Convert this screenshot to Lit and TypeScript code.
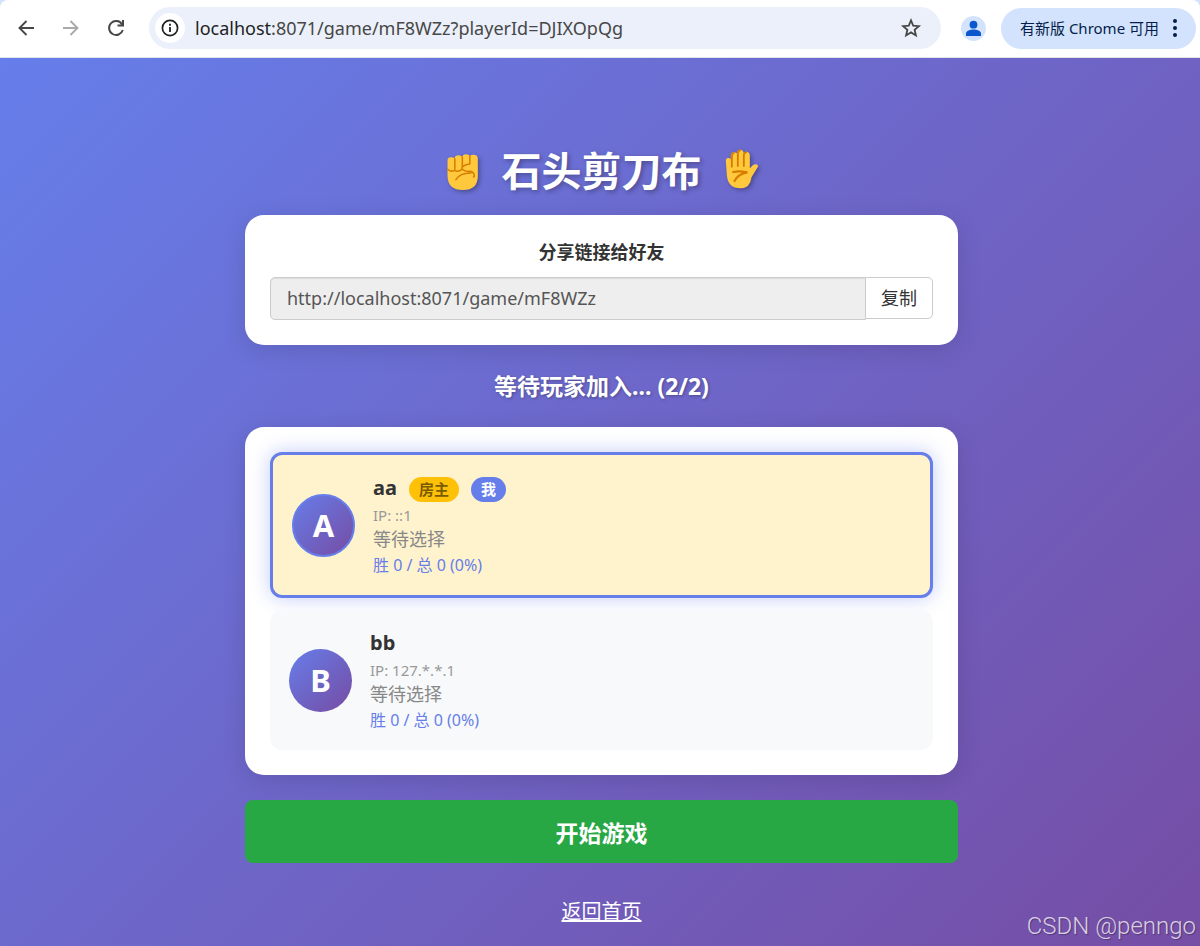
import { LitElement, html, css, nothing } from "lit";
import { customElement, property, state } from "lit/decorators.js";

interface Player {
  name: string;
  ip: string;
  status: string;
  stats: string;
  host?: boolean;
  me?: boolean;
}

@customElement("browser-bar")
class BrowserBar extends LitElement {
  @property() host = "";
  @property() path = "";

  static styles = css`
    :host {
      display: block;
      background: #d3e3fd;
      font-family: "Noto Sans", "Noto Sans CJK SC", sans-serif;
    }
    .bar {
      display: flex;
      align-items: center;
      height: 56px;
      padding: 0 4px 1px 8px;
      background: #fff;
      border-radius: 8px 8px 0 0;
      border-bottom: 1px solid #dfe3ea;
    }
    button {
      border: 0;
      padding: 0;
      margin: 0;
      background: none;
      font: inherit;
      color: inherit;
      display: flex;
      align-items: center;
      justify-content: center;
    }
    .nav {
      display: flex;
      gap: 9px;
      margin-right: 15px;
    }
    .nav button {
      width: 36px;
      height: 36px;
    }
    .address {
      flex: 1;
      display: flex;
      align-items: center;
      height: 42px;
      padding: 0 18px 0 6px;
      border-radius: 21px;
      background: #ebf0fa;
    }
    .address .info {
      width: 30px;
      height: 30px;
      border-radius: 50%;
      background: #fff;
    }
    .url {
      flex: 1;
      margin-left: 10px;
      font-size: 18px;
      line-height: 26px;
      color: #474747;
    }
    .url b {
      font-weight: 400;
      color: #1f1f1f;
    }
    .avatar {
      width: 25px;
      height: 25px;
      margin: 0 15px 0 20px;
    }
    .update {
      height: 41px;
      padding: 0 12px 0 19px;
      gap: 7px;
      border-radius: 21px;
      background: #d3e3fd;
      color: #041e49;
      font-size: 15px;
      line-height: 22px;
    }
    svg {
      display: block;
    }
  `;

  render() {
    return html`
      <header class="bar">
        <nav class="nav">
          <button aria-label="后退">
            <svg width="18" height="18" viewBox="0 0 18 18" fill="none" stroke="#474747" stroke-width="1.900">
              <path d="M17 9H3M9.500 2 2.500 9l7 7" />
            </svg>
          </button>
          <button aria-label="前进">
            <svg width="18" height="18" viewBox="0 0 18 18" fill="none" stroke="#ababab" stroke-width="1.900">
              <path d="M1 9h14M8.500 2l7 7-7 7" />
            </svg>
          </button>
          <button aria-label="刷新">
            <svg width="18" height="18" viewBox="0 0 18 18" fill="none" stroke="#474747" stroke-width="2">
              <path d="M15 5.200A7 7 0 1 0 15.800 11M16 1v5.500h-5.500" />
            </svg>
          </button>
        </nav>
        <div class="address">
          <button class="info" aria-label="网站信息">
            <svg width="18" height="18" viewBox="0 0 18 18" fill="none" stroke="#1f1f1f">
              <circle cx="9" cy="9" r="7.600" stroke-width="1.700" />
              <path d="M9 8v5M9 4.800v1.900" stroke-width="1.800" />
            </svg>
          </button>
          <span class="url"><b>${this.host}</b>${this.path}</span>
          <button aria-label="收藏">
            <svg width="24" height="24" viewBox="0 0 24 24" fill="none" stroke="#474747" stroke-width="1.800">
              <path d="M12 4.300l2.200 5.300 5.700.5-4.300 3.700 1.300 5.600L12 16.400l-4.900 3 1.300-5.600-4.300-3.700 5.700-.5z" />
            </svg>
          </button>
        </div>
        <button class="avatar" aria-label="个人资料">
          <svg width="25" height="25" viewBox="0 0 25 25">
            <circle cx="12.500" cy="12.500" r="12.500" fill="#d3e3fd" />
            <circle cx="12.500" cy="8.700" r="3.900" fill="#0b57d0" />
            <path d="M5 20v-2.500c0-2.700 4.500-4 7.500-4s7.500 1.300 7.500 4V20z" fill="#0b57d0" />
          </svg>
        </button>
        <button class="update">
          有新版 Chrome 可用
          <svg width="18" height="20" viewBox="0 0 18 20" fill="#041e49">
            <circle cx="9" cy="3" r="2" />
            <circle cx="9" cy="10" r="2" />
            <circle cx="9" cy="17" r="2" />
          </svg>
        </button>
      </header>
    `;
  }
}

@customElement("player-card")
class PlayerCard extends LitElement {
  @property({ attribute: false }) player!: Player;

  static styles = css`
    :host {
      display: block;
    }
    .card {
      display: flex;
      align-items: center;
      gap: 18px;
      padding: 19px;
      border-radius: 12px;
      background: #f8f9fb;
    }
    .card.me {
      background: #fff3cd;
      border: 3px solid #667eea;
      box-shadow: 0 0 19px rgba(102, 126, 234, 0.4);
    }
    .avatar {
      width: 63px;
      box-sizing: border-box;
      border-radius: 50%;
      background: linear-gradient(135deg, #667eea, #764ba2);
      color: #fff;
      font-size: 31px;
      line-height: 62px;
      height: 63px;
      font-weight: 700;
      text-align: center;
    }
    .me .avatar {
      border: 2px solid #667eea;
      background-origin: border-box;
      line-height: 58px;
    }
    .name {
      display: flex;
      align-items: center;
      height: 28px;
      font-size: 20px;
      line-height: 26px;
      font-weight: 700;
      color: #333;
    }
    .badge {
      margin: 2px 0 0 12px;
      padding: 0 10px;
      border-radius: 13px;
      font-size: 15px;
      line-height: 25px;
    }
    .host {
      background: #ffc107;
      color: #7a5c00;
    }
    .self {
      background: #667eea;
      color: #fff;
    }
    .ip {
      font-size: 15px;
      line-height: 26px;
      color: #999;
    }
    .status {
      font-size: 18px;
      line-height: 22px;
      color: #888;
    }
    .stats {
      margin-top: 4px;
      font-size: 16px;
      line-height: 22px;
      color: #667eea;
    }
  `;

  render() {
    const p = this.player;
    return html`
      <article class="card ${p.me ? "me" : ""}">
        <div class="avatar">${p.name[0].toUpperCase()}</div>
        <div>
          <div class="name">
            ${p.name}
            ${p.host ? html`<span class="badge host">房主</span>` : nothing}
            ${p.me ? html`<span class="badge self">我</span>` : nothing}
          </div>
          <div class="ip">IP: ${p.ip}</div>
          <div class="status">${p.status}</div>
          <div class="stats">${p.stats}</div>
        </div>
      </article>
    `;
  }
}

@customElement("app-root")
class AppRoot extends LitElement {
  @state() private players: Player[] = [
    { name: "aa", ip: "::1", status: "等待选择", stats: "胜 0 / 总 0 (0%)", host: true, me: true },
    { name: "bb", ip: "127.*.*.1", status: "等待选择", stats: "胜 0 / 总 0 (0%)" },
  ];

  static styles = css`
    :host {
      display: flex;
      flex-direction: column;
      position: relative;
      min-height: 100vh;
      font-family: "Noto Sans", "Noto Sans CJK SC", sans-serif;
    }
    main {
      flex: 1;
      padding: 85px 12px 18px 15px;
      background: linear-gradient(135deg, #667eea 0%, #764ba2 100%) 0 0 / 100% 110%;
    }
    .container {
      max-width: 713px;
      margin: 0 auto;
      display: flex;
      flex-direction: column;
    }
    h1 {
      display: flex;
      align-items: center;
      justify-content: center;
      gap: 20px;
      margin: 0 0 16px;
      font-size: 40px;
      line-height: 56px;
      color: #fff;
      text-shadow: 2px 2px 5px rgba(0, 0, 0, 0.3);
    }
    h1 svg {
      width: 40px;
      height: 44px;
      overflow: visible;
      filter: drop-shadow(2px 2px 2px rgba(0, 0, 0, 0.3));
    }
    .panel {
      padding: 25px;
      border-radius: 19px;
      background: #fff;
      box-shadow: 0 5px 25px rgba(0, 0, 0, 0.12);
    }
    .label {
      display: block;
      margin-bottom: 12px;
      font-size: 18px;
      line-height: 25px;
      font-weight: 700;
      text-align: center;
      color: #333;
    }
    .group {
      display: flex;
      align-items: flex-start;
    }
    .group input {
      flex: 1;
      min-width: 0;
      height: 43px;
      box-sizing: border-box;
      margin: 0;
      padding: 0 16px 2px;
      border: 1px solid #ccc;
      border-radius: 5px 0 0 5px;
      background: #eee;
      box-shadow: inset 0 1px 1px rgba(0, 0, 0, 0.075);
      color: #555;
      font-family: inherit;
      font-size: 18px;
      outline: 0;
    }
    .group button {
      height: 42px;
      margin-left: -1px;
      padding: 0 15px 2px;
      border: 1px solid #ccc;
      border-radius: 0 5px 5px 0;
      background: #fff;
      color: #333;
      font-family: inherit;
      font-size: 18px;
    }
    h2 {
      margin: 24px 0;
      font-size: 23px;
      line-height: 34px;
      text-align: center;
      color: #fff;
      text-shadow: 1px 1px 3px rgba(0, 0, 0, 0.3);
    }
    .players {
      display: flex;
      flex-direction: column;
      gap: 12px;
    }
    .start {
      height: 63px;
      margin: 25px 0 34px;
      border: 0;
      border-radius: 8px;
      background: #28a745;
      color: #fff;
      font-family: inherit;
      font-size: 23px;
      font-weight: 700;
    }
    .home {
      align-self: center;
      font-size: 20px;
      line-height: 30px;
      color: #fff;
      text-underline-offset: 1px;
    }
    .watermark {
      position: absolute;
      right: 4px;
      bottom: 6px;
      font-family: Roboto, "Liberation Sans", sans-serif;
      font-size: 24px;
      font-weight: 300;
      line-height: 28px;
      color: rgba(255, 255, 255, 0.75);
      text-shadow: 1px 1px 1px rgba(0, 0, 0, 0.3);
    }
  `;

  render() {
    return html`
      <browser-bar host="localhost" path=":8071/game/mF8WZz?playerId=DJIXOpQg"></browser-bar>
      <main>
        <div class="container">
          <h1>
            <svg viewBox="34.500 27 120 132" aria-hidden="true">
              <path
                d="M51 62q0-10 11-10 8 0 10 4 1-10 12-10 8 0 11 5 1-8 12-8 8 0 11 5 3-4 11-4 13 0 13 12v52q0 42-45 42T51 108z"
                fill="#ffc83d"
              />
              <path
                d="M73 56v32M95.500 51v31M118 48v24M52 88q8 9 20 3 10 6 22-2M118 72q-12 0-22 8-4 5 0 8 8 8 23 6 10 2 12 10 2 6-2 7M76 119q12-20 45-20"
                fill="none"
                stroke="#d67d00"
                stroke-width="4.500"
                stroke-linecap="round"
                stroke-linejoin="round"
              />
            </svg>
            <span>石头剪刀布</span>
            <svg viewBox="64.500 27 120 132" aria-hidden="true">
              <path
                d="M76 62q0-8 7-8 5 0 8 4V46q1-9 9-9 4 0 9 3 1-11 10-11 9 0 10 9 4-3 8-3 10 0 11 12v38l9-9q8-6 14-2 4 4-1 10l-17 28q-4 33-33 33-38 0-41-40z"
                fill="#ffc83d"
              />
              <path
                d="M94 80V49q0-9 6-10M112 78V43q0-12 7-12M130 78V45q1-8 7-8"
                fill="none"
                stroke="#d67d00"
                stroke-width="5.500"
                stroke-linecap="round"
              />
              <path
                d="M98 96q18-4 41 1-28 7-37 26"
                fill="none"
                stroke="#d67d00"
                stroke-width="6.500"
                stroke-linecap="round"
                stroke-linejoin="round"
              />
            </svg>
          </h1>
          <section class="panel">
            <label class="label" for="share">分享链接给好友</label>
            <div class="group">
              <input id="share" type="text" readonly value="http://localhost:8071/game/mF8WZz" />
              <button>复制</button>
            </div>
          </section>
          <h2>等待玩家加入... (${this.players.length}/2)</h2>
          <section class="panel players">
            ${this.players.map((p) => html`<player-card .player=${p}></player-card>`)}
          </section>
          <button class="start">开始游戏</button>
          <a class="home" href="#">返回首页</a>
        </div>
      </main>
      <div class="watermark">CSDN @penngo</div>
    `;
  }
}
